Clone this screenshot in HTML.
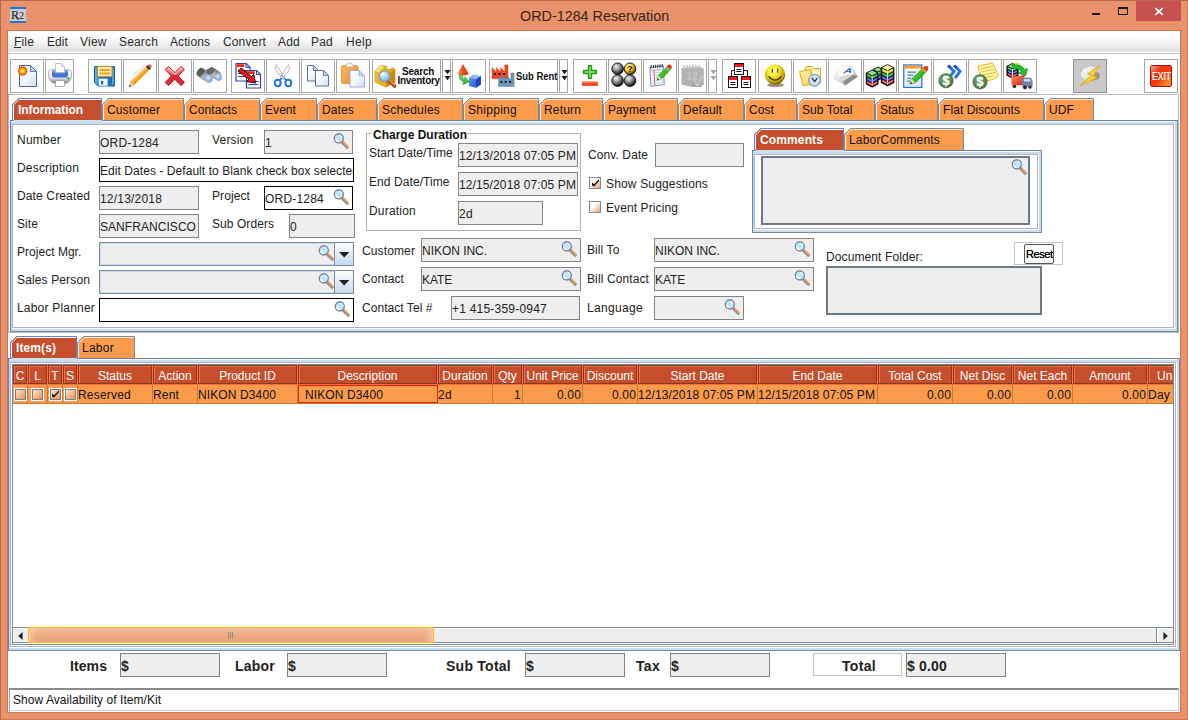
<!DOCTYPE html><html><head><meta charset="utf-8"><title>ORD-1284 Reservation</title><style>
*{margin:0;padding:0;box-sizing:border-box}
html,body{width:1188px;height:720px;overflow:hidden}
body{background:#E9926B;font-family:"Liberation Sans",sans-serif;font-size:12px;color:#1a1a1a;position:relative}
div,span,svg{position:absolute}
.t{white-space:nowrap;line-height:14px;font-size:12px;color:#222}
.b{font-weight:bold}
.w{color:#fff}
.big{font-size:14px;line-height:16px;font-weight:bold;color:#222}
.f{background:#EEE;border:1px solid #848484;overflow:hidden}
.fw{background:#fff;border:1px solid #000;overflow:hidden}
.f .t,.fw .t{position:absolute}
.tb{background:#fff;border:1px solid #a6a6a6}
.tab{background:#FB9B4B}
.sel{background:#C64E2C}
.hd{background:#C64E2C;border:1px solid #8A3A22;box-shadow:inset 1px 1px 0 #FF6E3C;color:#fff;text-align:center;font-size:12px;line-height:19px;padding-top:1px;white-space:nowrap;overflow:hidden}
.cell{background:#FB9B4B;border-right:1px solid #C97A3A;font-size:12px;line-height:19px;white-space:nowrap;overflow:hidden;color:#111}
.r{text-align:right}
.cb{width:12px;height:12px;border-top:1px solid #8a8a8a;border-left:1px solid #8a8a8a;border-right:1px solid #fff;border-bottom:1px solid #fff;background:linear-gradient(135deg,#fff 0%,#FBD9C2 45%,#F2A46F 100%)}
.cbt{width:13px;height:13px;border:1px solid #fff;box-shadow:inset 0 0 0 1px #6F8296;background:linear-gradient(135deg,#FFF0E2 0%,#F9BE92 45%,#F0863A 100%)}
</style></head><body>
<svg style="left:0;top:0" width="0" height="0"><defs><linearGradient id="gPage" x1="0" y1="0" x2="1" y2="1"><stop offset="0" stop-color="#fff"/><stop offset=".5" stop-color="#F4F8FD"/><stop offset="1" stop-color="#CFE0F4"/></linearGradient><radialGradient id="gSun"><stop offset="0" stop-color="#FFE800"/><stop offset=".45" stop-color="#FFB000"/><stop offset=".7" stop-color="#F23A1E"/><stop offset="1" stop-color="#F23A1E" stop-opacity="0"/></radialGradient><linearGradient id="gPrn" x1="0" y1="0" x2="0" y2="1"><stop offset="0" stop-color="#fff"/><stop offset=".5" stop-color="#ECECEC"/><stop offset=".8" stop-color="#B4B4B4"/><stop offset="1" stop-color="#6E6E6E"/></linearGradient><linearGradient id="gFlop" x1="0" y1="0" x2="1" y2="0"><stop offset="0" stop-color="#6BB8EE"/><stop offset=".25" stop-color="#2A8AD8"/><stop offset="1" stop-color="#1468B8"/></linearGradient><linearGradient id="gX" x1="0" y1="0" x2="0" y2="1"><stop offset="0" stop-color="#FAB8B8"/><stop offset=".42" stop-color="#EC5058"/><stop offset=".5" stop-color="#E02832"/><stop offset="1" stop-color="#DC2C38"/></linearGradient><linearGradient id="gBin" x1="0" y1="0" x2="1" y2="1"><stop offset="0" stop-color="#4A4A4A"/><stop offset=".5" stop-color="#A8A8A8"/><stop offset="1" stop-color="#DADADA"/></linearGradient><radialGradient id="gLens" cx=".4" cy=".35"><stop offset="0" stop-color="#D8ECFF"/><stop offset="1" stop-color="#7FB2EA"/></radialGradient><linearGradient id="gClip" x1="0" y1="0" x2="1" y2="1"><stop offset="0" stop-color="#F9B868"/><stop offset="1" stop-color="#EE8E2C"/></linearGradient><linearGradient id="gBox" x1="0" y1="0" x2="1" y2="1"><stop offset="0" stop-color="#F6D24A"/><stop offset=".6" stop-color="#E0A818"/><stop offset="1" stop-color="#B98408"/></linearGradient><radialGradient id="gGlass" cx=".4" cy=".35"><stop offset="0" stop-color="#E8F6FF"/><stop offset="1" stop-color="#8CC4E8"/></radialGradient><linearGradient id="gCone" x1="0" y1="0" x2="1" y2="0"><stop offset="0" stop-color="#FFB48A"/><stop offset=".45" stop-color="#F4521E"/><stop offset="1" stop-color="#E02A0A"/></linearGradient><linearGradient id="gCube" x1="0" y1="0" x2="1" y2="1"><stop offset="0" stop-color="#5E9CF2"/><stop offset="1" stop-color="#1C50C8"/></linearGradient><linearGradient id="gGreen" x1="0" y1="0" x2="0" y2="1"><stop offset="0" stop-color="#7BE060"/><stop offset="1" stop-color="#1FA81F"/></linearGradient><linearGradient id="gMinus" x1="0" y1="0" x2="0" y2="1"><stop offset="0" stop-color="#FF8A5A"/><stop offset="1" stop-color="#EE2A10"/></linearGradient><radialGradient id="gBall" cx=".38" cy=".32" r=".72"><stop offset="0" stop-color="#F4F4F4"/><stop offset=".4" stop-color="#9C9C9C"/><stop offset=".78" stop-color="#3A3A3A"/><stop offset="1" stop-color="#000"/></radialGradient><radialGradient id="gBallY" cx=".38" cy=".32" r=".72"><stop offset="0" stop-color="#FFF8C0"/><stop offset=".5" stop-color="#F8C820"/><stop offset=".85" stop-color="#7A5A00"/><stop offset="1" stop-color="#1A1000"/></radialGradient><radialGradient id="gSmile" cx=".42" cy=".33" r=".7"><stop offset="0" stop-color="#FFFFC0"/><stop offset=".4" stop-color="#F6E81E"/><stop offset=".8" stop-color="#B09800"/><stop offset="1" stop-color="#5A4C00"/></radialGradient><linearGradient id="gFold" x1="0" y1="0" x2="1" y2="1"><stop offset="0" stop-color="#FFF6B8"/><stop offset="1" stop-color="#FFD23C"/></linearGradient><linearGradient id="gKey" x1="0" y1="0" x2="1" y2="1"><stop offset="0" stop-color="#FFFFFF"/><stop offset=".6" stop-color="#D6D6D6"/><stop offset="1" stop-color="#7E7E7E"/></linearGradient><radialGradient id="gDol" cx=".4" cy=".35" r=".75"><stop offset="0" stop-color="#7FA874"/><stop offset="1" stop-color="#3E6E34"/></radialGradient><linearGradient id="gTruck" x1="0" y1="0" x2="1" y2="1"><stop offset="0" stop-color="#FF8A6A"/><stop offset="1" stop-color="#D62E12"/></linearGradient><linearGradient id="gCloud" x1="0" y1="0" x2="1" y2="1"><stop offset="0" stop-color="#fff"/><stop offset=".55" stop-color="#E4E4E0"/><stop offset="1" stop-color="#7C7C7C"/></linearGradient><linearGradient id="gExit" x1="0" y1="0" x2="1" y2="1"><stop offset="0" stop-color="#F0B0A0"/><stop offset=".3" stop-color="#F23A14"/><stop offset=".55" stop-color="#F83A0C"/><stop offset=".85" stop-color="#FF9030"/><stop offset="1" stop-color="#F86A20"/></linearGradient><linearGradient id="gPen" x1="0" y1="0" x2="1" y2="1"><stop offset="0" stop-color="#FFD060"/><stop offset=".5" stop-color="#F5A010"/><stop offset="1" stop-color="#D88000"/></linearGradient><linearGradient id="gGpen" x1="0" y1="0" x2="1" y2="1"><stop offset="0" stop-color="#A8F080"/><stop offset=".5" stop-color="#34C020"/><stop offset="1" stop-color="#1E8A12"/></linearGradient><linearGradient id="cg" x1="0" y1="0" x2="1" y2="1"><stop offset="0" stop-color="#fff"/><stop offset=".38" stop-color="#fff"/><stop offset="1" stop-color="#F39A58"/></linearGradient></defs></svg>
<div class="" style="left:0px;top:0px;width:1188px;height:720px;border:1px solid #B4694A;border-right-color:#C97B58;border-bottom-color:#C97B58"></div>
<div class="" style="left:10px;top:7px;width:16px;height:16px;background:#C9CCD3;border-top:2px solid #1E78C8;border-bottom:2px solid #1E78C8;overflow:hidden"><span class="t" style="left:1px;top:-1px;font-family:'Liberation Serif',serif;font-size:12px;line-height:14px;color:#1a1a1a">R</span><span class="t" style="left:9px;top:0px;font-family:'Liberation Serif',serif;font-size:10px;line-height:14px;color:#1a1a1a">2</span><svg style="left:0;top:0" width="16" height="12"><path d="M5.5 6.5 L8.5 11" stroke="#1a1a1a" stroke-width="1.1"/></svg></div>
<div class="" style="left:7px;top:30px;width:1174px;height:683px;border:1px solid rgba(170,85,45,.45)"></div>
<span class="t " style="left:520px;top:7px;font-size:15.5px;line-height:18px;color:#3a2418;transform:scaleX(.926);transform-origin:0 0">ORD-1284 Reservation</span>
<div class="" style="left:1092px;top:13px;width:8px;height:2px;background:#1a1a1a"></div>
<div class="" style="left:1118px;top:7px;width:10px;height:8px;border:1px solid #1a1a1a;border-top-width:2px"></div>
<div class="" style="left:1136px;top:1px;width:45px;height:20px;background:#C75050"></div>
<svg style="left:1154px;top:7px" width="10" height="9" viewBox="0 0 10 9"><path d="M1.3 1.2 L8.7 7.8 M8.7 1.2 L1.3 7.8" stroke="#fff" stroke-width="1.7" fill="none"/></svg>
<div class="" style="left:8px;top:31px;width:1172px;height:681px;background:#fff"></div>
<div class="" style="left:8px;top:31px;width:1172px;height:23px;background:linear-gradient(#fff 0%,#fcfcfc 30%,#e0e0e0 95.4%,#fff 95.5%);border-bottom:1px solid #c4c4c4"></div>
<span class="t " style="left:14px;top:35px;letter-spacing:0.166px;color:#2a2a2a">File</span>
<span class="t " style="left:47px;top:35px;letter-spacing:0.081px;color:#2a2a2a">Edit</span>
<span class="t " style="left:80px;top:35px;letter-spacing:0.248px;color:#2a2a2a">View</span>
<span class="t " style="left:119px;top:35px;letter-spacing:0.163px;color:#2a2a2a">Search</span>
<span class="t " style="left:170px;top:35px;letter-spacing:0.093px;color:#2a2a2a">Actions</span>
<span class="t " style="left:223px;top:35px;letter-spacing:0.14px;color:#2a2a2a">Convert</span>
<span class="t " style="left:278px;top:35px;letter-spacing:0.216px;color:#2a2a2a">Add</span>
<span class="t " style="left:311px;top:35px;letter-spacing:0.216px;color:#2a2a2a">Pad</span>
<span class="t " style="left:346px;top:35px;letter-spacing:0.33px;color:#2a2a2a">Help</span>
<div class="" style="left:14px;top:47px;width:7px;height:1px;background:#2a2a2a"></div>
<div class="tb" style="left:10px;top:59px;width:34px;height:34px;"><svg style="left:0;top:0" width="32" height="32" viewBox="0 0 32 32"><path d="M8.5 5.5 H19.5 L25.5 11.5 V26.5 H8.5 Z" fill="url(#gPage)" stroke="#3C5290" stroke-width="0.9" stroke-linejoin="round"/><path d="M19.5 5.5 V11.5 H25.5 Z" fill="#BBD6F2" stroke="#3C5290" stroke-width="0.7200000000000001" stroke-linejoin="round"/><circle cx="11.6" cy="11" r="5.4" fill="url(#gSun)"/><path d="M11.6 7.2 L12.5 9.6 L15 8.8 L13.6 11 L15 13.2 L12.5 12.4 L11.6 14.8 L10.7 12.4 L8.2 13.2 L9.6 11 L8.2 8.8 L10.7 9.6 Z" fill="#FFC400" opacity=".95"/><circle cx="11.6" cy="11" r="1.6" fill="#FFF04A"/></svg></div>
<div class="tb" style="left:45px;top:59px;width:29px;height:34px;"><svg style="left:0;top:0" width="27" height="32" viewBox="0 0 27 32"><path d="M2.5 12 Q2.5 9.6 6 9.6 H22 Q25.5 9.6 25.5 12 V15 Q25.5 22.5 19 23.4 H9 Q2.5 22.5 2.5 15 Z" fill="url(#gPrn)" stroke="#9A9A9A" stroke-width=".7"/><path d="M6 10.5 H22 V14.5 Q22 17.6 19 17.6 H9 Q6 17.6 6 14.5 Z" fill="#3F74E6"/><path d="M6.6 10.6 H21.4 V12.4 H6.6 Z" fill="#6C9CF4"/><path d="M9 12 H19 V14 H9 Z" fill="#7C84A4"/><path d="M9.5 12.5 V3.5 H15.5 L18.5 6.5 V12.5 Z" fill="#fff" stroke="#B4B4B4" stroke-width=".8"/><path d="M15.5 3.5 V6.5 H18.5" fill="#EFEFEF" stroke="#B4B4B4" stroke-width=".7"/><rect x="9.5" y="20.5" width="9" height="6" fill="#fff" stroke="#9A9A9A" stroke-width=".8"/><circle cx="22.4" cy="18.4" r="1.1" fill="#22B030"/></svg></div>
<div class="tb" style="left:88px;top:59px;width:34px;height:34px;"><svg style="left:0;top:0" width="32" height="32" viewBox="0 0 32 32"><path d="M5.5 6.5 H25.5 V26 H9 L5.5 22.5 Z" fill="url(#gFlop)" stroke="#1660B0"/><path d="M24 7.5 V24.5" stroke="#7CC4F4" stroke-width="1.2"/><rect x="8.5" y="6.5" width="14.5" height="10" fill="#FFEDB0" stroke="#C8862C"/><rect x="10.5" y="9" width="10.5" height="2" fill="#F6A623"/><rect x="10.5" y="12.4" width="10.5" height="2" fill="#F6A623"/><rect x="9.8" y="18.8" width="8.8" height="7" fill="#F4F8FC"/><rect x="12" y="20.8" width="2.2" height="3.6" fill="#1C64C8"/></svg></div>
<div class="tb" style="left:123px;top:59px;width:34px;height:34px;"><svg style="left:0;top:0" width="32" height="32" viewBox="0 0 32 32"><path d="M7 22 L11 13 L22 5" stroke="#D0D0D0" stroke-width="2.6" fill="none" opacity=".4" stroke-linecap="round"/><path d="M5 27 L6.8 21.6 L10.2 25 Z" fill="#EBCFA8" stroke="#B89060" stroke-width=".4"/><path d="M5 27 L5.7 24.8 L7.2 26.3 Z" fill="#333"/><path d="M6.8 21.6 L22.4 6.4 L25.6 9.6 L10.2 25 Z" fill="url(#gPen)"/><path d="M8 22.4 L23.4 7.4" stroke="#FFE29A" stroke-width=".9" opacity=".9"/><path d="M22 6.8 L23.8 5 L27 8.2 L25.2 10 Z" fill="#2E2E2E"/><path d="M24 4.8 Q25.6 3.6 27 4.9 Q28.4 6.4 27.2 8 Z" fill="#F2501E"/></svg></div>
<div class="tb" style="left:158px;top:59px;width:34px;height:34px;"><svg style="left:0;top:0" width="32" height="32" viewBox="0 0 32 32"><path d="M9.4 6.4 L15.8 12.6 L22.2 6.4 L25.4 9.6 L19.2 16 L25.4 22.4 L22.2 25.6 L15.8 19.4 L9.4 25.6 L6.2 22.4 L12.4 16 L6.2 9.6 Z" fill="url(#gX)" stroke="#B81422" stroke-width="1" stroke-linejoin="round"/><path d="M9.4 8 L15.8 14.2 L22.2 8" stroke="#FBD0D0" stroke-width="1.1" fill="none" opacity=".85"/></svg></div>
<div class="tb" style="left:193px;top:59px;width:34px;height:34px;"><svg style="left:0;top:0" width="32" height="32" viewBox="0 0 32 32"><g transform="rotate(33 10 15)"><rect x="2.6" y="10.4" width="14.6" height="8.6" rx="3.6" fill="url(#gBin)" stroke="#4E4E4E" stroke-width=".6"/><rect x="2.6" y="10.4" width="6" height="8.6" rx="3" fill="#4A4A4A" opacity=".75"/></g><g transform="rotate(33 20 13.5)"><rect x="13.4" y="9.4" width="13.4" height="7.8" rx="3.4" fill="url(#gBin)" stroke="#4E4E4E" stroke-width=".6"/><rect x="13.4" y="9.4" width="5" height="7.8" rx="2.8" fill="#4A4A4A" opacity=".7"/></g><path d="M12.4 9.4 L17 8 L19.6 9.8 L17.4 13.4 L13 12.4 Z" fill="#6A6A6A"/><ellipse cx="15" cy="18.6" rx="3.4" ry="3.8" transform="rotate(-12 15 18.6)" fill="url(#gLens)" stroke="#A8B2C2" stroke-width=".8"/><ellipse cx="24.6" cy="17.2" rx="3.1" ry="3.5" transform="rotate(-12 24.6 17.2)" fill="url(#gLens)" stroke="#A8B2C2" stroke-width=".8"/></svg></div>
<div class="tb" style="left:231px;top:59px;width:34px;height:34px;"><svg style="left:0;top:0" width="32" height="32" viewBox="0 0 32 32"><path d="M4.0 3.5 H14.0 L18.0 7.5 V21.0 H4.0 Z" fill="#fff" stroke="#2A48A4" stroke-width="1.2" stroke-linejoin="round"/><path d="M14.0 3.5 V7.5 H18.0 Z" fill="#BBD6F2" stroke="#2A48A4" stroke-width="0.96" stroke-linejoin="round"/><rect x="4.7" y="4.2" width="7.5" height="2.8" fill="#FF2410"/><path d="M6.0 10.5 H16.0" stroke="#2A48A4" stroke-width="1.1"/><path d="M6.0 13.5 H16.0" stroke="#2A48A4" stroke-width="1.1"/><path d="M6.0 16.5 H16.0" stroke="#2A48A4" stroke-width="1.1"/><path d="M14.5 10.5 H24.5 L28.5 14.5 V28.0 H14.5 Z" fill="#fff" stroke="#2A48A4" stroke-width="1.2" stroke-linejoin="round"/><path d="M24.5 10.5 V14.5 H28.5 Z" fill="#BBD6F2" stroke="#2A48A4" stroke-width="0.96" stroke-linejoin="round"/><rect x="15.2" y="11.2" width="7.5" height="2.8" fill="#FF2410"/><path d="M16.5 21.5 H26.5" stroke="#2A48A4" stroke-width="1.1"/><path d="M16.5 24.5 H26.5" stroke="#2A48A4" stroke-width="1.1"/><path d="M6 11.2 L9.2 8 L19.4 16.6 L21.8 14.2 L23.6 23 L14.4 21.6 L16.8 19.2 Z" fill="#F01414" stroke="#1A0000" stroke-width=".9" stroke-linejoin="round"/></svg></div>
<div class="tb" style="left:266px;top:59px;width:34px;height:34px;"><svg style="left:0;top:0" width="32" height="32" viewBox="0 0 32 32"><path d="M8.6 4.6 Q7.4 8 9.6 11.6 L16.4 19.6 L17.6 17.2 L11 7 Q9.8 5 8.6 4.6 Z" fill="#F4F4F4" stroke="#A4A4A4" stroke-width=".7"/><path d="M22 4.6 Q23.4 8 21.2 11.6 L14.6 19.6 L13.6 17.2 L19.8 7 Q20.8 5 22 4.6 Z" fill="#FAFAFA" stroke="#A4A4A4" stroke-width=".7"/><circle cx="15.5" cy="16.4" r=".8" fill="#888"/><ellipse cx="10.8" cy="23" rx="2.9" ry="3.2" fill="none" stroke="#1F7AE0" stroke-width="2"/><ellipse cx="21.3" cy="23" rx="2.9" ry="3.2" fill="none" stroke="#1F7AE0" stroke-width="2"/><path d="M12.6 20.4 L14.6 18 M19.4 20.4 L17.4 18" stroke="#1F7AE0" stroke-width="1.6"/></svg></div>
<div class="tb" style="left:301px;top:59px;width:34px;height:34px;"><svg style="left:0;top:0" width="32" height="32" viewBox="0 0 32 32"><path d="M5.5 5.5 H11.5 L16.5 10.5 V21.0 H5.5 Z" fill="url(#gPage)" stroke="#4A5E9C" stroke-width="0.9" stroke-linejoin="round"/><path d="M11.5 5.5 V10.5 H16.5 Z" fill="#BBD6F2" stroke="#4A5E9C" stroke-width="0.7200000000000001" stroke-linejoin="round"/><path d="M13.5 10.5 H21.5 L26.5 15.5 V26.0 H13.5 Z" fill="url(#gPage)" stroke="#4A5E9C" stroke-width="0.9" stroke-linejoin="round"/><path d="M21.5 10.5 V15.5 H26.5 Z" fill="#BBD6F2" stroke="#4A5E9C" stroke-width="0.7200000000000001" stroke-linejoin="round"/></svg></div>
<div class="tb" style="left:336px;top:59px;width:34px;height:34px;"><svg style="left:0;top:0" width="32" height="32" viewBox="0 0 32 32"><rect x="4.5" y="5.5" width="16.5" height="18" rx="1.5" fill="url(#gClip)" stroke="#D88A34" stroke-width=".8"/><path d="M9 7 V5 Q9 4.2 10 4.2 H10.6 Q10.9 3 12 3 H13.6 Q14.7 3 15 4.2 H15.6 Q16.6 4.2 16.6 5 V7 Z" fill="#F4F4F4" stroke="#A8A8A8" stroke-width=".7"/><path d="M13.0 10.5 H22.0 L27.5 16.0 V27.0 H13.0 Z" fill="url(#gPage)" stroke="#96A2E8" stroke-width="0.9" stroke-linejoin="round"/><path d="M22.0 10.5 V16.0 H27.5 Z" fill="#BBD6F2" stroke="#96A2E8" stroke-width="0.7200000000000001" stroke-linejoin="round"/></svg></div>
<div class="tb" style="left:372px;top:59px;width:69px;height:34px;"><svg style="left:0;top:0" width="67" height="32" viewBox="0 0 67 32"><path d="M2 11 L8 5 L14 6.5 L12.5 8.5 L17 10 L19 7.5 L22 9.5 V22 L13 27 L2 22 Z" fill="url(#gBox)" stroke="#B8860A" stroke-width=".7"/><path d="M2 11 L8 5 L11 6 L5.5 12.5 Z" fill="#FCE27A"/><path d="M5.5 12.5 L13 15.5 V27 L2 22 V11 Z" fill="#E9B628" opacity=".9"/><path d="M13 15.5 L22 9.5 V22 L13 27 Z" fill="#C18F0E"/><path d="M15.5 20 L21.5 26" stroke="#8E4A2A" stroke-width="3.6" stroke-linecap="round"/><path d="M16 19.6 L21.6 25.2" stroke="#F4581E" stroke-width="2.2" stroke-linecap="round"/><path d="M17 20.2 L21 24.2" stroke="#FFD0A0" stroke-width=".8" stroke-linecap="round"/><circle cx="11.5" cy="16.2" r="5.4" fill="url(#gGlass)" stroke="#8C96A4" stroke-width="1.3"/><path d="M8.2 15 A3.6 3.6 0 0 1 11 12.6" stroke="#fff" stroke-width="1.3" fill="none"/></svg><span class="t b" style="left:29px;top:7px;font-size:10px;line-height:10px;color:#111;letter-spacing:-.2px">Search</span><span class="t b" style="left:24.5px;top:16px;font-size:10px;line-height:10px;color:#111;letter-spacing:-.3px">Inventory</span></div>
<div class="tb" style="left:442px;top:59px;width:9px;height:34px;"><svg style="left:1px;top:10px" width="7" height="11" viewBox="0 0 7 11"><path d="M0.4 0 H6.6 L3.5 4.2 Z M0.4 6 H6.6 L3.5 10.2 Z" fill="#1a1a1a"/></svg></div>
<div class="tb" style="left:452px;top:59px;width:34px;height:34px;"><svg style="left:0;top:0" width="32" height="32" viewBox="0 0 32 32"><path d="M10 4 L15.8 14.2 Q10 16.6 4 14.2 Z" fill="url(#gCone)"/><path d="M6.4 14.6 Q5.4 20 10.6 21.6 L10 24.6 L16.4 21.8 L12 16.6 L11.6 19 Q8.8 18.2 9.4 14.8 Z" fill="url(#gGreen)" stroke="#1C9A1C" stroke-width=".5"/><path d="M16 17.5 L20.5 14.7 L27.8 16.2 V24.5 L23 27.8 L16 26 Z" fill="url(#gCube)"/><path d="M16 17.5 L20.5 14.7 L27.8 16.2 L23.2 19.2 Z" fill="#8DBAF8"/><path d="M23.2 19.2 L27.8 16.2 V24.5 L23 27.8 Z" fill="#1A48B8"/></svg></div>
<div class="tb" style="left:489px;top:59px;width:69px;height:34px;"><svg style="left:0;top:0" width="67" height="32" viewBox="0 0 67 32"><path d="M2 18.8 V7.76 L6.32 11.9 V7.76 L10.64 11.9 V7.76 L14.8 11.9 V5 H18 V18.8 Z" fill="#F4481C" stroke="#D03010" stroke-width=".5"/><rect x="3.92" y="13.004" width="2" height="2" fill="#111"/><rect x="8.4" y="13.004" width="2" height="2" fill="#111"/><rect x="12.88" y="13.004" width="2" height="2" fill="#111"/><path d="M8.5 26.6 V15.72 L12.712 19.8 V15.72 L16.924 19.8 V15.72 L20.98 19.8 V13 H24.1 V26.6 Z" fill="#6C9AB8" stroke="#4A7898" stroke-width=".5"/><rect x="10.372" y="20.887999999999998" width="2" height="2" fill="#111"/><rect x="14.74" y="20.887999999999998" width="2" height="2" fill="#111"/><rect x="19.108" y="20.887999999999998" width="2" height="2" fill="#111"/></svg><span class="t b" style="left:26px;top:11px;font-size:10.5px;line-height:11px;color:#111;transform:scaleX(.9);transform-origin:0 0">Sub Rent</span></div>
<div class="tb" style="left:559px;top:59px;width:9px;height:34px;"><svg style="left:1px;top:10px" width="7" height="11" viewBox="0 0 7 11"><path d="M0.4 0 H6.6 L3.5 4.2 Z M0.4 6 H6.6 L3.5 10.2 Z" fill="#1a1a1a"/></svg></div>
<div class="tb" style="left:573px;top:59px;width:34px;height:34px;"><svg style="left:0;top:0" width="32" height="32" viewBox="0 0 32 32"><path d="M13.8 5 H18.2 V9.8 H23 V14.2 H18.2 V19 H13.8 V14.2 H9 V9.8 H13.8 Z" fill="#1E9C1E"/><path d="M15.2 6.4 H16.8 V11.2 H21.6 V12.8 H16.8 V17.6 H15.2 V12.8 H10.4 V11.2 H15.2 Z" fill="#9AE070"/><rect x="8" y="21.3" width="16" height="4.5" fill="url(#gMinus)"/></svg></div>
<div class="tb" style="left:608px;top:59px;width:34px;height:34px;"><svg style="left:0;top:0" width="32" height="32" viewBox="0 0 32 32"><circle cx="8.6" cy="8.8" r="5.8" fill="url(#gBall)" stroke="#0c0c0c" stroke-width=".9"/><circle cx="21" cy="8.8" r="5.8" fill="url(#gBallY)" stroke="#0c0c0c" stroke-width=".9"/><circle cx="8.6" cy="20.6" r="5.8" fill="url(#gBall)" stroke="#0c0c0c" stroke-width=".9"/><circle cx="21" cy="20.6" r="5.8" fill="url(#gBall)" stroke="#0c0c0c" stroke-width=".9"/><text x="21" y="12.2" font-family="Liberation Sans,sans-serif" font-size="9.5" font-weight="bold" text-anchor="middle" fill="#2A1A00">?</text></svg></div>
<div class="tb" style="left:643px;top:59px;width:34px;height:34px;"><svg style="left:0;top:0" width="32" height="32" viewBox="0 0 32 32"><path d="M6 7.2 L19.4 6 L20.2 24.6 L6.8 26.2 Z" fill="#fff" stroke="#8A86D8" stroke-width="1.1"/><path d="M6.6 10.6 L19.6 9.4" stroke="#C9C6EE" stroke-width="1.6"/><path d="M10 10 L10.8 25.4" stroke="#F0502A" stroke-width="1"/><path d="M8 13 L19.6 12 M8 15.6 L19.8 14.6 M8 18.2 L19.8 17.2 M8 20.8 L19.8 19.8 M8 23.2 L19.8 22.2" stroke="#9FC4F0" stroke-width=".7"/><path d="M7 8.4 L7.4 5.2 M9.2 8.2 L9.6 5 M11.4 8 L11.8 4.8 M13.6 7.8 L14 4.6 M15.8 7.6 L16.2 4.4 M18 7.4 L18.4 4.2" stroke="#333" stroke-width="1.1"/><path d="M13 20.2 L14.2 15.4 L23 6.6 L26.4 10 L17.6 18.8 Z" fill="url(#gGpen)" stroke="#1F7A14" stroke-width=".5"/><path d="M13 20.2 L14.2 15.4 L17.6 18.8 Z" fill="#F0D8B0"/><path d="M13 20.2 L13.5 18.2 L15 19.7 Z" fill="#333"/><path d="M22.6 6.2 Q24.6 3.4 26.8 5 Q28.8 6.8 26.8 9.6 Z" fill="#E4321E"/><path d="M21.8 7.8 L25.2 11.2" stroke="#C0C0C0" stroke-width="1.2"/></svg></div>
<div class="tb" style="left:678px;top:59px;width:29px;height:34px;"><svg style="left:0;top:0" width="27" height="32" viewBox="0 0 27 32"><path d="M2.5 8 L20 6.5 L24.8 8.5 V25 L13 27 L2.5 24.5 Z" fill="#B2B2B2"/><path d="M13 22 H23 V27 H13 Z" fill="#A8A8A8"/><path d="M5 9 V5.8 M8 8.8 V5.4 M11 8.6 V5.2 M14 8.4 V5 M17 8.2 V5 M20 8 V5.2" stroke="#C8C8C8" stroke-width="1.6" stroke-linecap="round"/><text x="7" y="20" font-family="Liberation Sans,sans-serif" font-size="11" font-weight="bold" fill="#C4C4C4">12</text><path d="M15 20 L18.5 25.5 L23.5 15" stroke="#C8C8C8" stroke-width="1.6" fill="none"/></svg></div>
<div class="tb" style="left:708px;top:59px;width:9px;height:34px;"><svg style="left:1px;top:10px" width="7" height="11" viewBox="0 0 7 11"><path d="M0.4 0 H6.6 L3.5 4.2 Z M0.4 6 H6.6 L3.5 10.2 Z" fill="#A6A6A6"/></svg></div>
<div class="tb" style="left:722px;top:59px;width:34px;height:34px;"><svg style="left:0;top:0" width="32" height="32" viewBox="0 0 32 32"><path d="M11.5 10.5 H8.5 V16.5 M20.5 10.5 H24.5 V16.5" stroke="#111" stroke-width="1" fill="none"/><rect x="11.5" y="3.5" width="9" height="11" fill="#fff" stroke="#111" stroke-width="1"/><rect x="12" y="4" width="8" height="3" fill="#FF1616"/><path d="M13.5 9.5 H18.5 M13.5 11.5 H18.5" stroke="#111" stroke-width="1"/><rect x="5.5" y="16.5" width="9" height="11" fill="#fff" stroke="#111" stroke-width="1"/><rect x="6" y="17" width="8" height="3" fill="#FF1616"/><path d="M7.5 22.5 H12.5 M7.5 24.5 H12.5" stroke="#111" stroke-width="1"/><rect x="18.5" y="16.5" width="9" height="11" fill="#fff" stroke="#111" stroke-width="1"/><rect x="19" y="17" width="8" height="3" fill="#FF1616"/><path d="M20.5 22.5 H25.5 M20.5 24.5 H25.5" stroke="#111" stroke-width="1"/></svg></div>
<div class="tb" style="left:758px;top:59px;width:34px;height:34px;"><svg style="left:0;top:0" width="32" height="32" viewBox="0 0 32 32"><ellipse cx="16.5" cy="25" rx="8.5" ry="2.2" fill="#5A3A10" opacity=".55"/><circle cx="16" cy="14.6" r="10.2" fill="url(#gSmile)"/><path d="M13.3 9 V12.2 M18.7 9 V12.2" stroke="#4A4200" stroke-width="1.2" stroke-linecap="round"/><path d="M10 16.6 Q16 23.6 22 16.6" stroke="#3A3000" stroke-width="1.3" fill="none" stroke-linecap="round"/></svg></div>
<div class="tb" style="left:793px;top:59px;width:34px;height:34px;"><svg style="left:0;top:0" width="32" height="32" viewBox="0 0 32 32"><path d="M11 9 L12.5 6.5 H18 L19.5 8.5 H26.5 V23 H11 Z" fill="#FFEFA0" stroke="#E09A18" stroke-width=".9"/><path d="M13 11 H25 V23 H13 Z" fill="#FFF8D0"/><path d="M5.5 11.5 L17 9.5 L20 24.5 L9 25.5 Z" fill="url(#gFold)" stroke="#E09A18" stroke-width=".9" stroke-linejoin="round"/><circle cx="20.5" cy="20.2" r="5.8" fill="#CDE6FF" stroke="#8A9AC4" stroke-width="1.3"/><path d="M18 17.8 L20.6 21.6 L23.2 18.2" stroke="#222" stroke-width="1.2" fill="none"/></svg></div>
<div class="tb" style="left:828px;top:59px;width:34px;height:34px;"><svg style="left:0;top:0" width="32" height="32" viewBox="0 0 32 32"><path d="M4.4 17.8 L10.4 7.8 Q16.6 5.4 23.2 7.6 L27.8 16.6 L16.1 24.5 Z" fill="url(#gKey)" stroke="url(#gKey)" stroke-width="1.8" stroke-linejoin="round"/><path d="M10.6 8 Q16.6 6 22.8 8 L24.8 14 Q17 14.6 9.2 17 Z" fill="#fff" opacity=".9"/><path d="M25 14.4 L28.4 16.8 L16.1 25.2 L14 21.6 Z" fill="#7C7C7C" opacity=".75"/><text transform="matrix(1.35 -0.12 -0.45 0.78 13.6 13.4)" font-family="Liberation Sans,sans-serif" font-size="9" font-weight="bold" fill="#1E62E0">A</text></svg></div>
<div class="tb" style="left:863px;top:59px;width:34px;height:34px;"><svg style="left:0;top:0" width="32" height="32" viewBox="0 0 32 32"><path d="M9 9.5 L14.0 12.0 V16.0 L9 13.5 Z" fill="#1E9A2A"/><path d="M14.0 12.0 L19 9.5 V13.5 L14.0 16.0 Z" fill="#1E9A2A"/><path d="M10.2 10.8 L13.0 12.7 V13.8 L10.2 11.9 Z" fill="#8CE090" opacity=".9"/><path d="M15.0 12.7 L17.8 10.8 V11.9 L15.0 13.8 Z" fill="#8CE090" opacity=".9"/><path d="M9 13.5 L14.0 16.0 V20.0 L9 17.5 Z" fill="#2A3CE0"/><path d="M14.0 16.0 L19 13.5 V17.5 L14.0 20.0 Z" fill="#2A3CE0"/><path d="M10.2 14.8 L13.0 16.7 V17.8 L10.2 15.9 Z" fill="#A8B2FF" opacity=".9"/><path d="M15.0 16.7 L17.8 14.8 V15.9 L15.0 17.8 Z" fill="#A8B2FF" opacity=".9"/><path d="M9 13.5 L14.0 16.0 L19 13.5" fill="none" stroke="#0A0A0A" stroke-width=".9"/><path d="M9 9.5 L14.0 7 L19 9.5 L14.0 12.0 Z" fill="#8CE090" stroke="#0A0A0A" stroke-width=".9" stroke-linejoin="round"/><path d="M14.0 12.0 V20.0" stroke="#fff" stroke-width=".9" opacity=".9"/><path d="M9 9.5 V17.5 L14.0 20.0 L19 17.5 V9.5" fill="none" stroke="#0A0A0A" stroke-width="1.2" stroke-linejoin="round"/><path d="M2.4 12.9 L8.2 15.8 V19.5 L2.4 16.6 Z" fill="#1E9A2A"/><path d="M8.2 15.8 L14.0 12.9 V16.6 L8.2 19.5 Z" fill="#1E9A2A"/><path d="M3.5999999999999996 14.200000000000001 L7.199999999999999 16.5 V17.6 L3.5999999999999996 15.3 Z" fill="#8CE090" opacity=".9"/><path d="M9.2 16.5 L12.8 14.200000000000001 V15.3 L9.2 17.6 Z" fill="#8CE090" opacity=".9"/><path d="M2.4 16.599999999999998 L8.2 19.5 V23.2 L2.4 20.299999999999997 Z" fill="#2A3CE0"/><path d="M8.2 19.5 L14.0 16.599999999999998 V20.299999999999997 L8.2 23.2 Z" fill="#2A3CE0"/><path d="M3.5999999999999996 17.9 L7.199999999999999 20.2 V21.3 L3.5999999999999996 18.999999999999996 Z" fill="#A8B2FF" opacity=".9"/><path d="M9.2 20.2 L12.8 17.9 V18.999999999999996 L9.2 21.3 Z" fill="#A8B2FF" opacity=".9"/><path d="M2.4 16.599999999999998 L8.2 19.5 L14.0 16.599999999999998" fill="none" stroke="#0A0A0A" stroke-width=".9"/><path d="M2.4 20.299999999999997 L8.2 23.2 V26.9 L2.4 23.999999999999996 Z" fill="#E02828"/><path d="M8.2 23.2 L14.0 20.299999999999997 V23.999999999999996 L8.2 26.9 Z" fill="#E02828"/><path d="M3.5999999999999996 21.599999999999998 L7.199999999999999 23.9 V25.0 L3.5999999999999996 22.699999999999996 Z" fill="#FFA8A8" opacity=".9"/><path d="M9.2 23.9 L12.8 21.599999999999998 V22.699999999999996 L9.2 25.0 Z" fill="#FFA8A8" opacity=".9"/><path d="M2.4 20.299999999999997 L8.2 23.2 L14.0 20.299999999999997" fill="none" stroke="#0A0A0A" stroke-width=".9"/><path d="M2.4 12.9 L8.2 10 L14.0 12.9 L8.2 15.8 Z" fill="#8CE090" stroke="#0A0A0A" stroke-width=".9" stroke-linejoin="round"/><path d="M8.2 15.8 V26.900000000000002" stroke="#fff" stroke-width=".9" opacity=".9"/><path d="M2.4 12.9 V24.0 L8.2 26.900000000000002 L14.0 24.0 V12.9" fill="none" stroke="#0A0A0A" stroke-width="1.2" stroke-linejoin="round"/><path d="M17.4 7.699999999999999 L23.599999999999998 10.8 V14.5 L17.4 11.399999999999999 Z" fill="#D8D020"/><path d="M23.599999999999998 10.8 L29.799999999999997 7.699999999999999 V11.399999999999999 L23.599999999999998 14.5 Z" fill="#D8D020"/><path d="M18.599999999999998 9.0 L22.599999999999998 11.5 V12.600000000000001 L18.599999999999998 10.1 Z" fill="#FFFFA0" opacity=".9"/><path d="M24.599999999999998 11.5 L28.599999999999998 9.0 V10.1 L24.599999999999998 12.600000000000001 Z" fill="#FFFFA0" opacity=".9"/><path d="M17.4 11.4 L23.599999999999998 14.5 V18.2 L17.4 15.100000000000001 Z" fill="#1E9A2A"/><path d="M23.599999999999998 14.5 L29.799999999999997 11.4 V15.100000000000001 L23.599999999999998 18.2 Z" fill="#1E9A2A"/><path d="M18.599999999999998 12.700000000000001 L22.599999999999998 15.2 V16.3 L18.599999999999998 13.8 Z" fill="#8CE090" opacity=".9"/><path d="M24.599999999999998 15.2 L28.599999999999998 12.700000000000001 V13.8 L24.599999999999998 16.3 Z" fill="#8CE090" opacity=".9"/><path d="M17.4 11.4 L23.599999999999998 14.5 L29.799999999999997 11.4" fill="none" stroke="#0A0A0A" stroke-width=".9"/><path d="M17.4 15.1 L23.599999999999998 18.2 V21.9 L17.4 18.8 Z" fill="#2A3CE0"/><path d="M23.599999999999998 18.2 L29.799999999999997 15.1 V18.8 L23.599999999999998 21.9 Z" fill="#2A3CE0"/><path d="M18.599999999999998 16.4 L22.599999999999998 18.9 V20.0 L18.599999999999998 17.5 Z" fill="#A8B2FF" opacity=".9"/><path d="M24.599999999999998 18.9 L28.599999999999998 16.4 V17.5 L24.599999999999998 20.0 Z" fill="#A8B2FF" opacity=".9"/><path d="M17.4 15.1 L23.599999999999998 18.2 L29.799999999999997 15.1" fill="none" stroke="#0A0A0A" stroke-width=".9"/><path d="M17.4 18.8 L23.599999999999998 21.900000000000002 V25.6 L17.4 22.5 Z" fill="#E02828"/><path d="M23.599999999999998 21.900000000000002 L29.799999999999997 18.8 V22.5 L23.599999999999998 25.6 Z" fill="#E02828"/><path d="M18.599999999999998 20.1 L22.599999999999998 22.6 V23.700000000000003 L18.599999999999998 21.2 Z" fill="#FFA8A8" opacity=".9"/><path d="M24.599999999999998 22.6 L28.599999999999998 20.1 V21.2 L24.599999999999998 23.700000000000003 Z" fill="#FFA8A8" opacity=".9"/><path d="M17.4 18.8 L23.599999999999998 21.900000000000002 L29.799999999999997 18.8" fill="none" stroke="#0A0A0A" stroke-width=".9"/><path d="M17.4 7.699999999999999 L23.599999999999998 4.6 L29.799999999999997 7.699999999999999 L23.599999999999998 10.8 Z" fill="#FFFFA0" stroke="#0A0A0A" stroke-width=".9" stroke-linejoin="round"/><path d="M23.599999999999998 10.8 V25.6" stroke="#fff" stroke-width=".9" opacity=".9"/><path d="M17.4 7.699999999999999 V22.5 L23.599999999999998 25.6 L29.799999999999997 22.5 V7.699999999999999" fill="none" stroke="#0A0A0A" stroke-width="1.2" stroke-linejoin="round"/></svg></div>
<div class="tb" style="left:898px;top:59px;width:34px;height:34px;"><svg style="left:0;top:0" width="32" height="32" viewBox="0 0 32 32"><rect x="4.8" y="5" width="18" height="22.4" fill="#fff" stroke="#2272D4" stroke-width="1.3"/><path d="M5.4 20 L22 12 V26.8 H5.4 Z" fill="#D4E2F6" opacity=".8"/><rect x="5.4" y="5.6" width="16.8" height="3" fill="#FFA030"/><path d="M8.4 12.2 H17 M8.4 15.2 H14 M8.4 18.2 H12 M8.4 21.2 H11" stroke="#2C7CDA" stroke-width="1.2"/><path d="M11 24 L12.6 19 L23.6 8 L27.4 11.8 L16.4 22.8 Z" fill="url(#gGpen)" stroke="#1F7A14" stroke-width=".5"/><path d="M11 24 L12.6 19 L16.4 22.8 Z" fill="#F2D89A"/><path d="M11 24 L11.7 21.8 L13.4 23.4 Z" fill="#222"/><path d="M22.8 8.8 L26.6 12.6" stroke="#F0A030" stroke-width="1.4"/><path d="M23.8 7.8 Q26.6 4.6 28.8 6.6 Q30.6 8.8 27.6 11.6 Z" fill="#EE3A1E"/></svg></div>
<div class="tb" style="left:933px;top:59px;width:34px;height:34px;"><svg style="left:0;top:0" width="32" height="32" viewBox="0 0 32 32"><path d="M13 6.2 L15.4 4.8 L22 11.2 L16.4 18.8 L13.6 17.4 L18 11.4 Z" fill="#2A74E4"/><path d="M19 6.2 L21.4 4.8 L28 11.2 L22.4 18.8 L19.6 17.4 L24 11.4 Z" fill="#2A74E4"/><path d="M13 6.2 L15.4 4.8 L18 7.4 L16 8.6 Z M19 6.2 L21.4 4.8 L24 7.4 L22 8.6 Z" fill="#1450B8"/><circle cx="12" cy="20.7" r="7.2" fill="url(#gDol)" stroke="#3A6A30" stroke-width=".6"/><text x="12" y="25.1" font-family="Liberation Sans,sans-serif" font-size="12.5" font-weight="bold" text-anchor="middle" fill="#fff" stroke="#fff" stroke-width=".3">$</text></svg></div>
<div class="tb" style="left:968px;top:59px;width:34px;height:34px;"><svg style="left:0;top:0" width="32" height="32" viewBox="0 0 32 32"><path d="M9 6 L23.6 3 L29.4 15.6 L24.6 19.4 L12.6 21.8 Z" fill="#FFF6A4" stroke="#F2B41E" stroke-width="1" stroke-linejoin="round"/><path d="M11.4 9 L24 6.4 M12.2 12 L25.2 9.4 M13 15 L26.4 12.4 M13.8 18 L25 15.8" stroke="#E0C050" stroke-width="1"/><circle cx="11" cy="21.8" r="7.2" fill="url(#gDol)" stroke="#3A6A30" stroke-width=".6"/><text x="11" y="26.200000000000003" font-family="Liberation Sans,sans-serif" font-size="12.5" font-weight="bold" text-anchor="middle" fill="#fff" stroke="#fff" stroke-width=".3">$</text></svg></div>
<div class="tb" style="left:1003px;top:59px;width:34px;height:34px;"><svg style="left:0;top:0" width="32" height="32" viewBox="0 0 32 32"><path d="M3 6.15 L8.5 8.9 V11.9 L3 9.15 Z" fill="#1E9A2A"/><path d="M8.5 8.9 L14 6.15 V9.15 L8.5 11.9 Z" fill="#1E9A2A"/><path d="M4.2 7.45 L7.5 9.6 V10.700000000000001 L4.2 8.55 Z" fill="#8CE090" opacity=".9"/><path d="M9.5 9.6 L12.8 7.45 V8.55 L9.5 10.700000000000001 Z" fill="#8CE090" opacity=".9"/><path d="M3 9.15 L8.5 11.9 V14.9 L3 12.15 Z" fill="#2A3CE0"/><path d="M8.5 11.9 L14 9.15 V12.15 L8.5 14.9 Z" fill="#2A3CE0"/><path d="M4.2 10.450000000000001 L7.5 12.6 V13.700000000000001 L4.2 11.55 Z" fill="#A8B2FF" opacity=".9"/><path d="M9.5 12.6 L12.8 10.450000000000001 V11.55 L9.5 13.700000000000001 Z" fill="#A8B2FF" opacity=".9"/><path d="M3 9.15 L8.5 11.9 L14 9.15" fill="none" stroke="#0A0A0A" stroke-width=".9"/><path d="M3 12.15 L8.5 14.9 V17.9 L3 15.15 Z" fill="#E02828"/><path d="M8.5 14.9 L14 12.15 V15.15 L8.5 17.9 Z" fill="#E02828"/><path d="M4.2 13.450000000000001 L7.5 15.6 V16.7 L4.2 14.55 Z" fill="#FFA8A8" opacity=".9"/><path d="M9.5 15.6 L12.8 13.450000000000001 V14.55 L9.5 16.7 Z" fill="#FFA8A8" opacity=".9"/><path d="M3 12.15 L8.5 14.9 L14 12.15" fill="none" stroke="#0A0A0A" stroke-width=".9"/><path d="M3 6.15 L8.5 3.4 L14 6.15 L8.5 8.9 Z" fill="#8CE090" stroke="#0A0A0A" stroke-width=".9" stroke-linejoin="round"/><path d="M8.5 8.9 V17.9" stroke="#fff" stroke-width=".9" opacity=".9"/><path d="M3 6.15 V15.15 L8.5 17.9 L14 15.15 V6.15" fill="none" stroke="#0A0A0A" stroke-width="1.2" stroke-linejoin="round"/><path d="M8 4.4 Q17 3.4 20.6 9.6 L23.6 8.4 L21.6 16 L14.4 13 L17.2 11.6 Q14.6 7.6 8.6 8.4 Z" fill="#22C022" stroke="#128A12" stroke-width=".6"/><path d="M11 4.2 Q13 2.8 15 4.4" stroke="#F0E040" stroke-width="1.6" fill="none"/><path d="M7.4 16.8 L16.6 15.6 L18.6 17 V25 L8.4 25.8 L7.4 24.6 Z" fill="url(#gTruck)"/><path d="M16.6 15.6 L20.4 15.6 L20.6 17.4 L18.6 17.6 Z" fill="#D82A12"/><path d="M18.6 18 L26.6 18 L28.2 21 V26.4 L18.6 26.4 Z" fill="#7484B8" stroke="#54608E" stroke-width=".5"/><path d="M20 19 H25.8 L27 21.6 H20 Z" fill="#C6DAF6"/><circle cx="10.4" cy="26.4" r="1.7" fill="#222"/><circle cx="21" cy="27.4" r="1.9" fill="#222"/><circle cx="26" cy="27.2" r="1.6" fill="#333"/></svg></div>
<div class="tb" style="left:1073px;top:59px;width:34px;height:34px;background:#c9c9c9;border-color:#8f8f8f;"><svg style="left:0;top:0" width="32" height="32" viewBox="0 0 32 32"><path d="M8 17 Q5.4 13.6 8.6 11.4 Q9 7.4 13.4 8 Q16 5 19.4 7.4 Q23.6 6.6 24.4 10.4 Q27 12 25.6 15.4 Q26 19 22.4 19.6 Q19 22 16 20 Q11 21.6 8 17 Z" fill="url(#gCloud)"/><path d="M19 12 Q24 10 25.6 14.6 Q26 19 22.4 19.6 Q19 21 18 18 Z" fill="#8A8A8A" opacity=".7"/><path d="M25.5 5.6 L13.6 13.8 L17.4 15.2 L6 25.8 L23.6 17.4 L19.4 15.8 Z" fill="#FAD424" stroke="#D89A10" stroke-width=".7" stroke-linejoin="round"/></svg></div>
<div class="tb" style="left:1144px;top:59px;width:34px;height:34px;"><svg style="left:0;top:0" width="32" height="32" viewBox="0 0 32 32"><path d="M6.5 5.5 H25.5 L26.5 6.5 V25.5 L25.5 26.5 H6.5 L5.5 25.5 V6.5 Z" fill="url(#gExit)" stroke="#A21212" stroke-width="1"/></svg><span class="t" style="left:6.6px;top:11px;font-size:10px;line-height:12px;color:#fff;transform:scaleX(.86);transform-origin:0 0;text-shadow:0 0 .3px #fff">EXIT</span></div>
<div class="" style="left:8px;top:94px;width:1171px;height:239px;border:1px solid #b9b9b9"></div>
<div class="" style="left:10px;top:120px;width:1168px;height:212px;background:#fff;border:1px solid #6382BF;border-right-color:#7A8A99;border-bottom-color:#7A8A99"></div>
<div class="" style="left:11px;top:121px;width:1166px;height:210px;border-style:solid;border-color:#C8DDF2;border-width:3px 2px 2px 1px"></div>
<div class="" style="left:12px;top:121px;width:1163px;height:1px;background:#fff"></div>
<div class="" style="left:12px;top:124px;width:1162px;height:204px;border:1px solid #b4b4b4;background:#fff"></div>
<svg style="left:12px;top:98px" width="90" height="24" viewBox="0 0 90 24"><path d="M0.5 22 V6.5 L6.5 0.5 H89.5 V22" fill="#C64E2C" stroke="#6382BF"/><path d="M1.5 22 V7 L7 1.5 H89" fill="none" stroke="#fff"/><rect x="2" y="22" width="88" height="2" fill="#C8E2F8"/><rect x="0" y="22" width="2" height="1" fill="#6382BF"/></svg>
<span class="t b w" style="left:18px;top:103px;letter-spacing:-0.09px;">Information</span>
<svg style="left:102px;top:98px" width="82" height="22" viewBox="0 0 82 22"><path d="M0.5 22 V6.5 L6.5 0.5 H81.5 V22" fill="#FB9B4B" stroke="#7A8A99"/><path d="M1.5 22 V7 L7 1.5 H81" fill="none" stroke="#FFE3C8"/></svg>
<span class="t " style="left:107px;top:103px;letter-spacing:0.123px;color:#111">Customer</span>
<svg style="left:184px;top:98px" width="76" height="22" viewBox="0 0 76 22"><path d="M0.5 22 V6.5 L6.5 0.5 H75.5 V22" fill="#FB9B4B" stroke="#7A8A99"/><path d="M1.5 22 V7 L7 1.5 H75" fill="none" stroke="#FFE3C8"/></svg>
<span class="t " style="left:189px;top:103px;letter-spacing:0.081px;color:#111">Contacts</span>
<svg style="left:260px;top:98px" width="57" height="22" viewBox="0 0 57 22"><path d="M0.5 22 V6.5 L6.5 0.5 H56.5 V22" fill="#FB9B4B" stroke="#7A8A99"/><path d="M1.5 22 V7 L7 1.5 H56" fill="none" stroke="#FFE3C8"/></svg>
<span class="t " style="left:265px;top:103px;letter-spacing:0.063px;color:#111">Event</span>
<svg style="left:317px;top:98px" width="60" height="22" viewBox="0 0 60 22"><path d="M0.5 22 V6.5 L6.5 0.5 H59.5 V22" fill="#FB9B4B" stroke="#7A8A99"/><path d="M1.5 22 V7 L7 1.5 H59" fill="none" stroke="#FFE3C8"/></svg>
<span class="t " style="left:322px;top:103px;letter-spacing:0.13px;color:#111">Dates</span>
<svg style="left:377px;top:98px" width="86" height="22" viewBox="0 0 86 22"><path d="M0.5 22 V6.5 L6.5 0.5 H85.5 V22" fill="#FB9B4B" stroke="#7A8A99"/><path d="M1.5 22 V7 L7 1.5 H85" fill="none" stroke="#FFE3C8"/></svg>
<span class="t " style="left:382px;top:103px;letter-spacing:0.218px;color:#111">Schedules</span>
<svg style="left:463px;top:98px" width="76" height="22" viewBox="0 0 76 22"><path d="M0.5 22 V6.5 L6.5 0.5 H75.5 V22" fill="#FB9B4B" stroke="#7A8A99"/><path d="M1.5 22 V7 L7 1.5 H75" fill="none" stroke="#FFE3C8"/></svg>
<span class="t " style="left:468px;top:103px;letter-spacing:0.287px;color:#111">Shipping</span>
<svg style="left:539px;top:98px" width="64" height="22" viewBox="0 0 64 22"><path d="M0.5 22 V6.5 L6.5 0.5 H63.5 V22" fill="#FB9B4B" stroke="#7A8A99"/><path d="M1.5 22 V7 L7 1.5 H63" fill="none" stroke="#FFE3C8"/></svg>
<span class="t " style="left:544px;top:103px;letter-spacing:0.164px;color:#111">Return</span>
<svg style="left:603px;top:98px" width="75" height="22" viewBox="0 0 75 22"><path d="M0.5 22 V6.5 L6.5 0.5 H74.5 V22" fill="#FB9B4B" stroke="#7A8A99"/><path d="M1.5 22 V7 L7 1.5 H74" fill="none" stroke="#FFE3C8"/></svg>
<span class="t " style="left:608px;top:103px;letter-spacing:0.092px;color:#111">Payment</span>
<svg style="left:678px;top:98px" width="66" height="22" viewBox="0 0 66 22"><path d="M0.5 22 V6.5 L6.5 0.5 H65.5 V22" fill="#FB9B4B" stroke="#7A8A99"/><path d="M1.5 22 V7 L7 1.5 H65" fill="none" stroke="#FFE3C8"/></svg>
<span class="t " style="left:683px;top:103px;letter-spacing:0.14px;color:#111">Default</span>
<svg style="left:744px;top:98px" width="53" height="22" viewBox="0 0 53 22"><path d="M0.5 22 V6.5 L6.5 0.5 H52.5 V22" fill="#FB9B4B" stroke="#7A8A99"/><path d="M1.5 22 V7 L7 1.5 H52" fill="none" stroke="#FFE3C8"/></svg>
<span class="t " style="left:749px;top:103px;letter-spacing:0.082px;color:#111">Cost</span>
<svg style="left:797px;top:98px" width="78" height="22" viewBox="0 0 78 22"><path d="M0.5 22 V6.5 L6.5 0.5 H77.5 V22" fill="#FB9B4B" stroke="#7A8A99"/><path d="M1.5 22 V7 L7 1.5 H77" fill="none" stroke="#FFE3C8"/></svg>
<span class="t " style="left:802px;top:103px;letter-spacing:0.071px;color:#111">Sub Total</span>
<svg style="left:875px;top:98px" width="63" height="22" viewBox="0 0 63 22"><path d="M0.5 22 V6.5 L6.5 0.5 H62.5 V22" fill="#FB9B4B" stroke="#7A8A99"/><path d="M1.5 22 V7 L7 1.5 H62" fill="none" stroke="#FFE3C8"/></svg>
<span class="t " style="left:880px;top:103px;color:#111">Status</span>
<svg style="left:938px;top:98px" width="106" height="22" viewBox="0 0 106 22"><path d="M0.5 22 V6.5 L6.5 0.5 H105.5 V22" fill="#FB9B4B" stroke="#7A8A99"/><path d="M1.5 22 V7 L7 1.5 H105" fill="none" stroke="#FFE3C8"/></svg>
<span class="t " style="left:943px;top:103px;letter-spacing:0.07px;color:#111">Flat Discounts</span>
<svg style="left:1044px;top:98px" width="50" height="22" viewBox="0 0 50 22"><path d="M0.5 22 V6.5 L6.5 0.5 H49.5 V22" fill="#FB9B4B" stroke="#7A8A99"/><path d="M1.5 22 V7 L7 1.5 H49" fill="none" stroke="#FFE3C8"/></svg>
<span class="t " style="left:1049px;top:103px;letter-spacing:0.113px;color:#111">UDF</span>
<span class="t " style="left:17px;top:133px;letter-spacing:0.22px;">Number</span>
<div class="f" style="left:99px;top:130px;width:100px;height:24px;"><span class="t" style="left:0px;top:5px;letter-spacing:0.205px;">ORD-1284</span></div>
<span class="t " style="left:17px;top:161px;letter-spacing:0.18px;">Description</span>
<div class="fw" style="left:99px;top:158px;width:255px;height:24px;"><span class="t" style="left:0px;top:5px;letter-spacing:0.06px;">Edit Dates - Default to Blank check box selected</span></div>
<span class="t " style="left:17px;top:189px;letter-spacing:0.136px;">Date Created</span>
<div class="f" style="left:99px;top:186px;width:100px;height:24px;"><span class="t" style="left:0px;top:5px;letter-spacing:0.194px;">12/13/2018</span></div>
<span class="t " style="left:17px;top:217px;letter-spacing:0.081px;">Site</span>
<div class="f" style="left:99px;top:214px;width:100px;height:24px;"><span class="t" style="left:0px;top:5px;letter-spacing:0.055px;">SANFRANCISCO</span></div>
<span class="t " style="left:17px;top:245px;letter-spacing:0.027px;">Project Mgr.</span>
<span class="t " style="left:17px;top:273px;letter-spacing:0.136px;">Sales Person</span>
<span class="t " style="left:17px;top:301px;letter-spacing:0.201px;">Labor Planner</span>
<div class="fw" style="left:99px;top:298px;width:255px;height:24px;"><svg style="left:234px;top:2px" width="17" height="17" viewBox="0 0 17 17"><path d="M9.6 9.6 L14.3 14.3" stroke="#8486AE" stroke-width="3" stroke-linecap="round"/><path d="M10.4 9.2 L14.8 13.6" stroke="#F6A233" stroke-width="1.7" stroke-linecap="round"/><circle cx="5.9" cy="5.6" r="5.2" fill="#9C9CA8" opacity=".5"/><circle cx="5.8" cy="5.3" r="4.5" fill="#BDE6FB" stroke="#74769E" stroke-width="1.15"/><path d="M2.9 6.6 A3 3 0 0 0 5 8.6" stroke="#fff" stroke-width="1.5" fill="none" stroke-linecap="round"/><path d="M6.8 2.4 A3 3 0 0 1 8.8 4.6" stroke="#fff" stroke-width="1.1" fill="none" stroke-linecap="round" opacity=".8"/></svg></div>
<span class="t " style="left:212px;top:133px;letter-spacing:0.188px;">Version</span>
<div class="f" style="left:264px;top:130px;width:89px;height:24px;"><span class="t" style="left:0px;top:5px;letter-spacing:0.326px;">1</span><svg style="left:68px;top:2px" width="17" height="17" viewBox="0 0 17 17"><path d="M9.6 9.6 L14.3 14.3" stroke="#8486AE" stroke-width="3" stroke-linecap="round"/><path d="M10.4 9.2 L14.8 13.6" stroke="#F6A233" stroke-width="1.7" stroke-linecap="round"/><circle cx="5.9" cy="5.6" r="5.2" fill="#9C9CA8" opacity=".5"/><circle cx="5.8" cy="5.3" r="4.5" fill="#BDE6FB" stroke="#74769E" stroke-width="1.15"/><path d="M2.9 6.6 A3 3 0 0 0 5 8.6" stroke="#fff" stroke-width="1.5" fill="none" stroke-linecap="round"/><path d="M6.8 2.4 A3 3 0 0 1 8.8 4.6" stroke="#fff" stroke-width="1.1" fill="none" stroke-linecap="round" opacity=".8"/></svg></div>
<span class="t " style="left:212px;top:189px;letter-spacing:0.093px;">Project</span>
<div class="fw" style="left:264px;top:186px;width:89px;height:24px;"><span class="t" style="left:0px;top:5px;letter-spacing:0.205px;">ORD-1284</span><svg style="left:68px;top:2px" width="17" height="17" viewBox="0 0 17 17"><path d="M9.6 9.6 L14.3 14.3" stroke="#8486AE" stroke-width="3" stroke-linecap="round"/><path d="M10.4 9.2 L14.8 13.6" stroke="#F6A233" stroke-width="1.7" stroke-linecap="round"/><circle cx="5.9" cy="5.6" r="5.2" fill="#9C9CA8" opacity=".5"/><circle cx="5.8" cy="5.3" r="4.5" fill="#BDE6FB" stroke="#74769E" stroke-width="1.15"/><path d="M2.9 6.6 A3 3 0 0 0 5 8.6" stroke="#fff" stroke-width="1.5" fill="none" stroke-linecap="round"/><path d="M6.8 2.4 A3 3 0 0 1 8.8 4.6" stroke="#fff" stroke-width="1.1" fill="none" stroke-linecap="round" opacity=".8"/></svg></div>
<span class="t " style="left:212px;top:217px;letter-spacing:0.064px;">Sub Orders</span>
<div class="f" style="left:289px;top:214px;width:66px;height:24px;"><span class="t" style="left:0px;top:5px;letter-spacing:0.326px;">0</span></div>
<div class="" style="left:99px;top:242px;width:255px;height:24px;background:#EEE;border:1px solid #7A8A99;box-shadow:inset 1px 1px 0 #C8DDF2, inset -1px -1px 0 #C8DDF2"><svg style="left:218px;top:2px" width="17" height="17" viewBox="0 0 17 17"><path d="M9.6 9.6 L14.3 14.3" stroke="#8486AE" stroke-width="3" stroke-linecap="round"/><path d="M10.4 9.2 L14.8 13.6" stroke="#F6A233" stroke-width="1.7" stroke-linecap="round"/><circle cx="5.9" cy="5.6" r="5.2" fill="#9C9CA8" opacity=".5"/><circle cx="5.8" cy="5.3" r="4.5" fill="#BDE6FB" stroke="#74769E" stroke-width="1.15"/><path d="M2.9 6.6 A3 3 0 0 0 5 8.6" stroke="#fff" stroke-width="1.5" fill="none" stroke-linecap="round"/><path d="M6.8 2.4 A3 3 0 0 1 8.8 4.6" stroke="#fff" stroke-width="1.1" fill="none" stroke-linecap="round" opacity=".8"/></svg><div style="left:234px;top:0;width:19px;height:22px;border-left:1px solid #7A8A99;background:linear-gradient(#fff 0%,#EAF1F9 35%,#C4D9EE 100%)"><svg style="left:4px;top:9px" width="11" height="6"><path d="M0 0 H10.4 L5.2 5.6 Z" fill="#222"/></svg></div></div>
<div class="" style="left:99px;top:270px;width:255px;height:24px;background:#EEE;border:1px solid #7A8A99;box-shadow:inset 1px 1px 0 #C8DDF2, inset -1px -1px 0 #C8DDF2"><svg style="left:218px;top:2px" width="17" height="17" viewBox="0 0 17 17"><path d="M9.6 9.6 L14.3 14.3" stroke="#8486AE" stroke-width="3" stroke-linecap="round"/><path d="M10.4 9.2 L14.8 13.6" stroke="#F6A233" stroke-width="1.7" stroke-linecap="round"/><circle cx="5.9" cy="5.6" r="5.2" fill="#9C9CA8" opacity=".5"/><circle cx="5.8" cy="5.3" r="4.5" fill="#BDE6FB" stroke="#74769E" stroke-width="1.15"/><path d="M2.9 6.6 A3 3 0 0 0 5 8.6" stroke="#fff" stroke-width="1.5" fill="none" stroke-linecap="round"/><path d="M6.8 2.4 A3 3 0 0 1 8.8 4.6" stroke="#fff" stroke-width="1.1" fill="none" stroke-linecap="round" opacity=".8"/></svg><div style="left:234px;top:0;width:19px;height:22px;border-left:1px solid #7A8A99;background:linear-gradient(#fff 0%,#EAF1F9 35%,#C4D9EE 100%)"><svg style="left:4px;top:9px" width="11" height="6"><path d="M0 0 H10.4 L5.2 5.6 Z" fill="#222"/></svg></div></div>
<div class="" style="left:366px;top:133px;width:215px;height:98px;border:1px solid #b0b0b0"></div>
<div class="" style="left:371px;top:128px;width:96px;height:12px;background:#fff"></div>
<span class="t b" style="left:373px;top:128px;color:#111">Charge Duration</span>
<span class="t " style="left:369px;top:146px;">Start Date/Time</span>
<div class="f" style="left:458px;top:143px;width:120px;height:24px;"><span class="t" style="left:0px;top:5px;letter-spacing:0.118px;">12/13/2018 07:05 PM</span></div>
<span class="t " style="left:369px;top:175px;letter-spacing:0.074px;">End Date/Time</span>
<div class="f" style="left:458px;top:172px;width:120px;height:24px;"><span class="t" style="left:0px;top:5px;letter-spacing:0.118px;">12/15/2018 07:05 PM</span></div>
<span class="t " style="left:369px;top:204px;letter-spacing:0.205px;">Duration</span>
<div class="f" style="left:458px;top:201px;width:85px;height:24px;"><span class="t" style="left:0px;top:5px;letter-spacing:0.326px;">2d</span></div>
<span class="t " style="left:588px;top:148px;letter-spacing:0.097px;">Conv. Date</span>
<div class="f" style="left:655px;top:143px;width:89px;height:24px;"></div>
<svg style="left:589px;top:177px" width="13" height="13" viewBox="0 0 13 13"><rect x="0.5" y="0.5" width="11" height="11" fill="url(#cg)" stroke="#7A8A99"/><path d="M1.5 11 V1.5 H11" fill="none" stroke="#fff"/><path d="M3 5.2 V8.4 L5 9.8 L10 4 V2.2 L5 7.2 Z" fill="#1c1c1c"/></svg>
<span class="t " style="left:606px;top:177px;letter-spacing:0.163px;">Show Suggestions</span>
<svg style="left:589px;top:201px" width="13" height="13" viewBox="0 0 13 13"><rect x="0.5" y="0.5" width="11" height="11" fill="url(#cg)" stroke="#7A8A99"/><path d="M1.5 11 V1.5 H11" fill="none" stroke="#fff"/></svg>
<span class="t " style="left:606px;top:201px;letter-spacing:0.1px;">Event Pricing</span>
<span class="t " style="left:362px;top:244px;letter-spacing:0.123px;">Customer</span>
<div class="f" style="left:421px;top:238px;width:160px;height:24px;"><span class="t" style="left:0px;top:5px;letter-spacing:-0.034px;">NIKON INC.</span><svg style="left:139px;top:2px" width="17" height="17" viewBox="0 0 17 17"><path d="M9.6 9.6 L14.3 14.3" stroke="#8486AE" stroke-width="3" stroke-linecap="round"/><path d="M10.4 9.2 L14.8 13.6" stroke="#F6A233" stroke-width="1.7" stroke-linecap="round"/><circle cx="5.9" cy="5.6" r="5.2" fill="#9C9CA8" opacity=".5"/><circle cx="5.8" cy="5.3" r="4.5" fill="#BDE6FB" stroke="#74769E" stroke-width="1.15"/><path d="M2.9 6.6 A3 3 0 0 0 5 8.6" stroke="#fff" stroke-width="1.5" fill="none" stroke-linecap="round"/><path d="M6.8 2.4 A3 3 0 0 1 8.8 4.6" stroke="#fff" stroke-width="1.1" fill="none" stroke-linecap="round" opacity=".8"/></svg></div>
<span class="t " style="left:362px;top:272px;letter-spacing:0.092px;">Contact</span>
<div class="f" style="left:421px;top:267px;width:160px;height:24px;"><span class="t" style="left:0px;top:5px;letter-spacing:-0.085px;">KATE</span><svg style="left:139px;top:2px" width="17" height="17" viewBox="0 0 17 17"><path d="M9.6 9.6 L14.3 14.3" stroke="#8486AE" stroke-width="3" stroke-linecap="round"/><path d="M10.4 9.2 L14.8 13.6" stroke="#F6A233" stroke-width="1.7" stroke-linecap="round"/><circle cx="5.9" cy="5.6" r="5.2" fill="#9C9CA8" opacity=".5"/><circle cx="5.8" cy="5.3" r="4.5" fill="#BDE6FB" stroke="#74769E" stroke-width="1.15"/><path d="M2.9 6.6 A3 3 0 0 0 5 8.6" stroke="#fff" stroke-width="1.5" fill="none" stroke-linecap="round"/><path d="M6.8 2.4 A3 3 0 0 1 8.8 4.6" stroke="#fff" stroke-width="1.1" fill="none" stroke-linecap="round" opacity=".8"/></svg></div>
<span class="t " style="left:362px;top:301px;letter-spacing:0.049px;">Contact Tel #</span>
<div class="f" style="left:451px;top:296px;width:129px;height:24px;"><span class="t" style="left:0px;top:5px;letter-spacing:0.217px;">+1 415-359-0947</span></div>
<span class="t " style="left:587px;top:243px;letter-spacing:0.094px;">Bill To</span>
<div class="f" style="left:654px;top:238px;width:160px;height:24px;"><span class="t" style="left:0px;top:5px;letter-spacing:-0.034px;">NIKON INC.</span><svg style="left:139px;top:2px" width="17" height="17" viewBox="0 0 17 17"><path d="M9.6 9.6 L14.3 14.3" stroke="#8486AE" stroke-width="3" stroke-linecap="round"/><path d="M10.4 9.2 L14.8 13.6" stroke="#F6A233" stroke-width="1.7" stroke-linecap="round"/><circle cx="5.9" cy="5.6" r="5.2" fill="#9C9CA8" opacity=".5"/><circle cx="5.8" cy="5.3" r="4.5" fill="#BDE6FB" stroke="#74769E" stroke-width="1.15"/><path d="M2.9 6.6 A3 3 0 0 0 5 8.6" stroke="#fff" stroke-width="1.5" fill="none" stroke-linecap="round"/><path d="M6.8 2.4 A3 3 0 0 1 8.8 4.6" stroke="#fff" stroke-width="1.1" fill="none" stroke-linecap="round" opacity=".8"/></svg></div>
<span class="t " style="left:587px;top:272px;letter-spacing:0.109px;">Bill Contact</span>
<div class="f" style="left:654px;top:267px;width:160px;height:24px;"><span class="t" style="left:0px;top:5px;letter-spacing:-0.085px;">KATE</span><svg style="left:139px;top:2px" width="17" height="17" viewBox="0 0 17 17"><path d="M9.6 9.6 L14.3 14.3" stroke="#8486AE" stroke-width="3" stroke-linecap="round"/><path d="M10.4 9.2 L14.8 13.6" stroke="#F6A233" stroke-width="1.7" stroke-linecap="round"/><circle cx="5.9" cy="5.6" r="5.2" fill="#9C9CA8" opacity=".5"/><circle cx="5.8" cy="5.3" r="4.5" fill="#BDE6FB" stroke="#74769E" stroke-width="1.15"/><path d="M2.9 6.6 A3 3 0 0 0 5 8.6" stroke="#fff" stroke-width="1.5" fill="none" stroke-linecap="round"/><path d="M6.8 2.4 A3 3 0 0 1 8.8 4.6" stroke="#fff" stroke-width="1.1" fill="none" stroke-linecap="round" opacity=".8"/></svg></div>
<span class="t " style="left:587px;top:301px;letter-spacing:0.326px;">Language</span>
<div class="f" style="left:654px;top:296px;width:90px;height:24px;"><svg style="left:69px;top:2px" width="17" height="17" viewBox="0 0 17 17"><path d="M9.6 9.6 L14.3 14.3" stroke="#8486AE" stroke-width="3" stroke-linecap="round"/><path d="M10.4 9.2 L14.8 13.6" stroke="#F6A233" stroke-width="1.7" stroke-linecap="round"/><circle cx="5.9" cy="5.6" r="5.2" fill="#9C9CA8" opacity=".5"/><circle cx="5.8" cy="5.3" r="4.5" fill="#BDE6FB" stroke="#74769E" stroke-width="1.15"/><path d="M2.9 6.6 A3 3 0 0 0 5 8.6" stroke="#fff" stroke-width="1.5" fill="none" stroke-linecap="round"/><path d="M6.8 2.4 A3 3 0 0 1 8.8 4.6" stroke="#fff" stroke-width="1.1" fill="none" stroke-linecap="round" opacity=".8"/></svg></div>
<div class="" style="left:752px;top:150px;width:290px;height:83px;background:#fff;border:1px solid #6382BF;border-right-color:#7A8A99;border-bottom-color:#7A8A99"></div>
<div class="" style="left:753px;top:151px;width:288px;height:81px;border-style:solid;border-color:#C8DDF2;border-width:3px 2px 2px 1px"></div>
<div class="" style="left:754px;top:151px;width:285px;height:1px;background:#fff"></div>
<div class="" style="left:754px;top:154px;width:284px;height:75px;border:1px solid #b4b4b4;background:#fff"></div>
<svg style="left:754px;top:128px" width="90" height="24" viewBox="0 0 90 24"><path d="M0.5 22 V6.5 L6.5 0.5 H89.5 V22" fill="#C64E2C" stroke="#6382BF"/><path d="M1.5 22 V7 L7 1.5 H89" fill="none" stroke="#fff"/><rect x="2" y="22" width="88" height="2" fill="#C8E2F8"/><rect x="0" y="22" width="2" height="1" fill="#6382BF"/></svg>
<span class="t b w" style="left:760px;top:133px;letter-spacing:0.124px;">Comments</span>
<svg style="left:844px;top:128px" width="120" height="22" viewBox="0 0 120 22"><path d="M0.5 22 V6.5 L6.5 0.5 H119.5 V22" fill="#FB9B4B" stroke="#7A8A99"/><path d="M1.5 22 V7 L7 1.5 H119" fill="none" stroke="#FFE3C8"/></svg>
<span class="t " style="left:849px;top:133px;letter-spacing:0.177px;color:#111">LaborComments</span>
<div class="" style="left:761px;top:156px;width:269px;height:69px;background:#EEE;border:2px solid #6F7A86;border-right-width:2px"><svg style="left:248px;top:1px" width="17" height="17" viewBox="0 0 17 17"><path d="M9.6 9.6 L14.3 14.3" stroke="#8486AE" stroke-width="3" stroke-linecap="round"/><path d="M10.4 9.2 L14.8 13.6" stroke="#F6A233" stroke-width="1.7" stroke-linecap="round"/><circle cx="5.9" cy="5.6" r="5.2" fill="#9C9CA8" opacity=".5"/><circle cx="5.8" cy="5.3" r="4.5" fill="#BDE6FB" stroke="#74769E" stroke-width="1.15"/><path d="M2.9 6.6 A3 3 0 0 0 5 8.6" stroke="#fff" stroke-width="1.5" fill="none" stroke-linecap="round"/><path d="M6.8 2.4 A3 3 0 0 1 8.8 4.6" stroke="#fff" stroke-width="1.1" fill="none" stroke-linecap="round" opacity=".8"/></svg></div>
<span class="t " style="left:826px;top:250px;letter-spacing:0.102px;">Document Folder:</span>
<div class="" style="left:826px;top:266px;width:216px;height:49px;background:#EEE;border:2px solid #6F7A86"></div>
<div class="" style="left:1014px;top:242px;width:49px;height:23px;border:1px solid #c4c4c4;background:#fff"></div>
<div class="" style="left:1024px;top:244px;width:30px;height:20px;border:1px solid #555;background:#fff;border-radius:2px"><span class="t" style="left:1px;top:2px;font-size:11px;color:#000;letter-spacing:-.4px;text-shadow:0 0 .35px #000">Reset</span></div>
<div class="" style="left:8px;top:358px;width:1172px;height:293px;background:#fff;border:1px solid #6382BF;border-right-color:#7A8A99;border-bottom-color:#7A8A99"></div>
<div class="" style="left:9px;top:359px;width:1170px;height:291px;border-style:solid;border-color:#C8DDF2;border-width:3px 2px 2px 1px"></div>
<div class="" style="left:10px;top:359px;width:1167px;height:1px;background:#fff"></div>
<div class="" style="left:10px;top:362px;width:1166px;height:285px;border:1px solid #b4b4b4;background:#fff"></div>
<svg style="left:10px;top:336px" width="67" height="24" viewBox="0 0 67 24"><path d="M0.5 22 V6.5 L6.5 0.5 H66.5 V22" fill="#C64E2C" stroke="#6382BF"/><path d="M1.5 22 V7 L7 1.5 H66" fill="none" stroke="#fff"/><rect x="2" y="22" width="65" height="2" fill="#C8E2F8"/><rect x="0" y="22" width="2" height="1" fill="#6382BF"/></svg>
<span class="t b w" style="left:16px;top:341px;letter-spacing:0.094px;">Item(s)</span>
<svg style="left:77px;top:336px" width="58" height="22" viewBox="0 0 58 22"><path d="M0.5 22 V6.5 L6.5 0.5 H57.5 V22" fill="#FB9B4B" stroke="#7A8A99"/><path d="M1.5 22 V7 L7 1.5 H57" fill="none" stroke="#FFE3C8"/></svg>
<span class="t " style="left:82px;top:341px;letter-spacing:0.262px;color:#111">Labor</span>
<div class="" style="left:12px;top:364px;width:1162px;height:281px;border:1px solid #7A8A99;background:#fff"></div>
<div class="" style="left:13px;top:365px;width:1160px;height:20px;background:#FF6E3C"></div>
<div class="" style="left:13px;top:385px;width:1160px;height:19px;background:#FB9B4B;border-bottom:1px solid #C67A34"></div>
<div class="hd" style="left:13px;top:365px;width:14px;height:19px;">C</div>
<div class="" style="left:27px;top:385px;width:1px;height:18px;background:#C67A34"></div>
<div class="cbt" style="left:14px;top:388px"></div>
<div class="hd" style="left:28px;top:365px;width:19px;height:19px;">L</div>
<div class="" style="left:47px;top:385px;width:1px;height:18px;background:#C67A34"></div>
<div class="cbt" style="left:31px;top:388px"></div>
<div class="hd" style="left:48px;top:365px;width:14px;height:19px;">T</div>
<div class="" style="left:62px;top:385px;width:1px;height:18px;background:#C67A34"></div>
<div class="cbt" style="left:49px;top:388px"><svg style="left:-1px;top:-1px" width="13" height="13" viewBox="0 0 13 13"><path d="M3 5.2 V8.4 L5 9.8 L10 4 V2.2 L5 7.2 Z" fill="#1c1c1c"/></svg></div>
<div class="hd" style="left:63px;top:365px;width:14px;height:19px;">S</div>
<div class="" style="left:77px;top:385px;width:1px;height:18px;background:#C67A34"></div>
<div class="cbt" style="left:64px;top:388px"></div>
<div class="hd" style="left:78px;top:365px;width:74px;height:19px;">Status</div>
<div class="" style="left:152px;top:385px;width:1px;height:18px;background:#C67A34"></div>
<span class="t " style="left:78px;top:388px;letter-spacing:0.205px;color:#111">Reserved</span>
<div class="hd" style="left:153px;top:365px;width:44px;height:19px;">Action</div>
<div class="" style="left:197px;top:385px;width:1px;height:18px;background:#C67A34"></div>
<span class="t " style="left:153px;top:388px;letter-spacing:0.163px;color:#111">Rent</span>
<div class="hd" style="left:198px;top:365px;width:99px;height:19px;">Product ID</div>
<div class="" style="left:297px;top:385px;width:1px;height:18px;background:#C67A34"></div>
<span class="t " style="left:198px;top:388px;letter-spacing:0.118px;color:#111">NIKON D3400</span>
<div class="hd" style="left:298px;top:365px;width:139px;height:19px;">Description</div>
<div class="" style="left:437px;top:385px;width:1px;height:18px;background:#C67A34"></div>
<div class="" style="left:298px;top:385px;width:140px;height:18px;border:1px solid #E8200C"></div>
<span class="t " style="left:305px;top:388px;letter-spacing:0.118px;color:#111">NIKON D3400</span>
<div class="hd" style="left:438px;top:365px;width:54px;height:19px;">Duration</div>
<div class="" style="left:492px;top:385px;width:1px;height:18px;background:#C67A34"></div>
<span class="t " style="left:438px;top:388px;letter-spacing:0.326px;color:#111">2d</span>
<div class="hd" style="left:493px;top:365px;width:29px;height:19px;">Qty</div>
<div class="" style="left:522px;top:385px;width:1px;height:18px;background:#C67A34"></div>
<span class="t" style="left:493px;top:388px;width:28px;text-align:right;color:#111;letter-spacing:0.326px;">1</span>
<div class="hd" style="left:523px;top:365px;width:59px;height:19px;">Unit Price</div>
<div class="" style="left:582px;top:385px;width:1px;height:18px;background:#C67A34"></div>
<span class="t" style="left:523px;top:388px;width:58px;text-align:right;color:#111;letter-spacing:0.161px;">0.00</span>
<div class="hd" style="left:583px;top:365px;width:54px;height:19px;">Discount</div>
<div class="" style="left:637px;top:385px;width:1px;height:18px;background:#C67A34"></div>
<span class="t" style="left:583px;top:388px;width:53px;text-align:right;color:#111;letter-spacing:0.161px;">0.00</span>
<div class="hd" style="left:638px;top:365px;width:119px;height:19px;">Start Date</div>
<div class="" style="left:757px;top:385px;width:1px;height:18px;background:#C67A34"></div>
<span class="t " style="left:638px;top:388px;letter-spacing:0.118px;color:#111">12/13/2018 07:05 PM</span>
<div class="hd" style="left:758px;top:365px;width:119px;height:19px;">End Date</div>
<div class="" style="left:877px;top:385px;width:1px;height:18px;background:#C67A34"></div>
<span class="t " style="left:758px;top:388px;letter-spacing:0.118px;color:#111">12/15/2018 07:05 PM</span>
<div class="hd" style="left:878px;top:365px;width:74px;height:19px;">Total Cost</div>
<div class="" style="left:952px;top:385px;width:1px;height:18px;background:#C67A34"></div>
<span class="t" style="left:878px;top:388px;width:73px;text-align:right;color:#111;letter-spacing:0.161px;">0.00</span>
<div class="hd" style="left:953px;top:365px;width:59px;height:19px;">Net Disc</div>
<div class="" style="left:1012px;top:385px;width:1px;height:18px;background:#C67A34"></div>
<span class="t" style="left:953px;top:388px;width:58px;text-align:right;color:#111;letter-spacing:0.161px;">0.00</span>
<div class="hd" style="left:1013px;top:365px;width:59px;height:19px;">Net Each</div>
<div class="" style="left:1072px;top:385px;width:1px;height:18px;background:#C67A34"></div>
<span class="t" style="left:1013px;top:388px;width:58px;text-align:right;color:#111;letter-spacing:0.161px;">0.00</span>
<div class="hd" style="left:1073px;top:365px;width:74px;height:19px;">Amount</div>
<div class="" style="left:1147px;top:385px;width:1px;height:18px;background:#C67A34"></div>
<span class="t" style="left:1073px;top:388px;width:73px;text-align:right;color:#111;letter-spacing:0.161px;">0.00</span>
<div class="hd" style="left:1148px;top:365px;width:25px;height:19px;border-right:none;text-align:left;padding-left:8px">Un</div>
<span class="t " style="left:1148px;top:388px;letter-spacing:0.22px;color:#111">Day</span>
<div class="" style="left:13px;top:627px;width:1160px;height:16px;background:#EEE;border-top:1px solid #7A8A99;border-bottom:1px solid #7A8A99;box-shadow:inset 0 1px 0 #fff"></div>
<div class="" style="left:13px;top:628px;width:1px;height:14px;background:#fff"></div>
<svg style="left:18px;top:632px" width="5" height="8"><path d="M4.6 0 V8 L0.2 4 Z" fill="#222"/></svg>
<div class="" style="left:1156px;top:628px;width:1px;height:14px;background:#7A8A99"></div>
<div class="" style="left:1157px;top:628px;width:1px;height:14px;background:#fff"></div>
<svg style="left:1163px;top:632px" width="5" height="8"><path d="M0.4 0 V8 L4.8 4 Z" fill="#222"/></svg>
<div class="" style="left:28px;top:627px;width:406px;height:16px;background:linear-gradient(#F3BC98 0%,#EDAA80 55%,#EAA074 100%);border:1px solid #FCBB14;box-shadow:inset 8px 0 8px -6px #F7D3BB, inset -8px 0 8px -6px #F7D3BB"><div style="left:199px;top:4px;width:1px;height:7px;background:#9a8a80"></div><div style="left:201px;top:4px;width:1px;height:7px;background:#9a8a80"></div><div style="left:203px;top:4px;width:1px;height:7px;background:#9a8a80"></div></div>
<span class="t big" style="left:70px;top:658px;letter-spacing:0.086px;">Items</span>
<div class="f" style="left:120px;top:653px;width:100px;height:24px;"><span class="t big" style="left:0px;top:4px;letter-spacing:0.214px;">$</span></div>
<span class="t big" style="left:235px;top:658px;letter-spacing:0.222px;">Labor</span>
<div class="f" style="left:287px;top:653px;width:100px;height:24px;"><span class="t big" style="left:0px;top:4px;letter-spacing:0.214px;">$</span></div>
<span class="t big" style="left:446px;top:658px;letter-spacing:0.248px;">Sub Total</span>
<div class="f" style="left:525px;top:653px;width:100px;height:24px;"><span class="t big" style="left:0px;top:4px;letter-spacing:0.214px;">$</span></div>
<span class="t big" style="left:636px;top:658px;letter-spacing:0.292px;">Tax</span>
<div class="f" style="left:670px;top:653px;width:100px;height:24px;"><span class="t big" style="left:0px;top:4px;letter-spacing:0.214px;">$</span></div>
<div class="" style="left:813px;top:653px;width:89px;height:23px;border:1px solid #c2c2c2;background:#fff"></div>
<span class="t big" style="left:842px;top:658px;letter-spacing:0.312px;">Total</span>
<div class="f" style="left:906px;top:653px;width:100px;height:24px;"><span class="t big" style="left:0px;top:4px;letter-spacing:0.179px;">$ 0.00</span></div>
<div class="" style="left:9px;top:688px;width:1170px;height:23px;background:#fff;border:1px solid #d0d0d0;border-top:2px solid #8c8c8c;border-left-color:#a0a0a0"></div>
<span class="t " style="left:13px;top:693px;letter-spacing:0.055px;color:#111">Show Availability of Item/Kit</span>
</body></html>
